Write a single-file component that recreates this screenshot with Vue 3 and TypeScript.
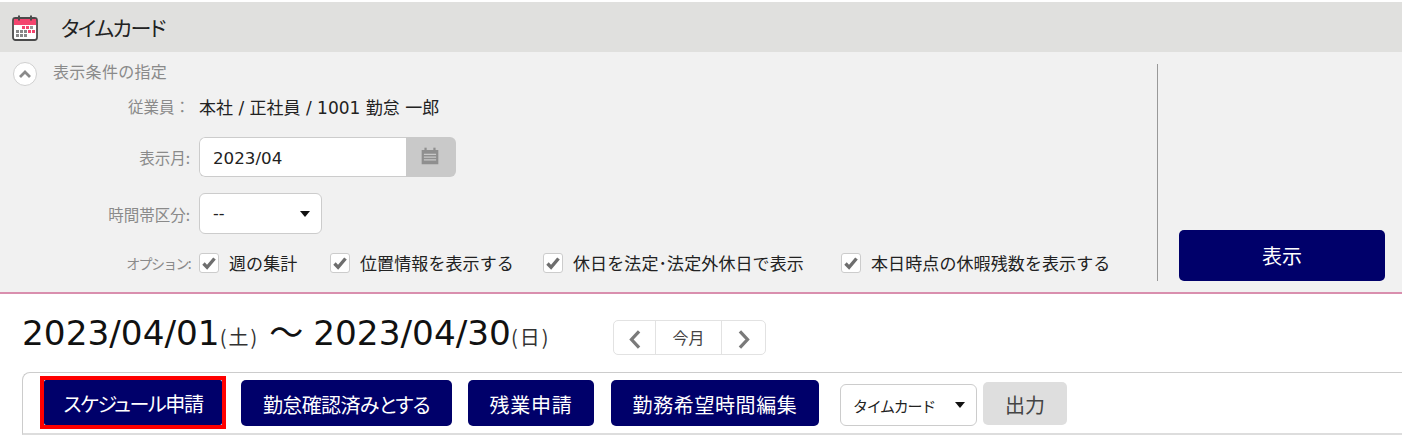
<template>
  <div class="timecard">
    <header class="page-head">
      <svg class="page-head__icon" viewBox="0 0 26 26">
        <rect x="1" y="3" width="24" height="22" rx="2.5" fill="#fff" stroke="#4a4a4a" stroke-width="1.8" />
        <path d="M2 4h22v6H2z" fill="#f4446e" />
        <rect x="6" y="0.5" width="2" height="5" fill="#4a4a4a" />
        <rect x="18" y="0.5" width="2" height="5" fill="#4a4a4a" />
        <g v-for="cell in calendarCells" :key="cell.x + '-' + cell.y">
          <rect :x="cell.x" :y="cell.y" width="3" height="3" :fill="cell.fill" />
        </g>
      </svg>
      <h1 class="page-head__title">タイムカード</h1>
    </header>

    <section class="filter">
      <div class="filter__main">
        <div class="filter__toggle">
          <span class="toggle-circle">
            <svg viewBox="0 0 14 10" width="14" height="10">
              <path d="M2 8L7 3l5 5" fill="none" stroke="#8a8a8a" stroke-width="2.8" />
            </svg>
          </span>
          <span class="filter__toggle-text">表示条件の指定</span>
        </div>

        <div class="field field--employee">
          <span class="field__label">従業員：</span>
          <span class="field__text">本社 / 正社員 / 1001 勤怠 一郎</span>
        </div>

        <div class="field field--month">
          <span class="field__label">表示月:</span>
          <div class="month-input">
            <span class="month-input__value">2023/04</span>
            <span class="month-input__btn">
              <svg viewBox="0 0 18 18" width="20" height="20">
                <path d="M1.500 3.500h15v13h-15z" fill="#8f8f8f" />
                <rect x="4" y="1.500" width="2" height="3" fill="#8f8f8f" />
                <rect x="12" y="1.500" width="2" height="3" fill="#8f8f8f" />
                <path d="M3.500 7.500h11M3.500 10h11M3.500 12.500h11" stroke="#c9c9c9" stroke-width="1" />
              </svg>
            </span>
          </div>
        </div>

        <div class="field field--zone">
          <span class="field__label">時間帯区分:</span>
          <div class="select select--zone">
            <span>--</span>
            <i class="select__arrow"></i>
          </div>
        </div>

        <div class="field field--options">
          <span class="field__label field__label--narrow">オプション:</span>
          <div class="options">
            <label v-for="opt in options" :key="opt.text" class="option" :style="{ width: opt.width + 'px' }">
              <span class="option__box">
                <svg viewBox="0 0 16 14" width="16" height="14">
                  <path d="M2.500 7.500l3.600 3.800L13.500 2.500" fill="none" stroke="#6e6e6e" stroke-width="3.400" />
                </svg>
              </span>
              <span class="option__text">{{ opt.text }}</span>
            </label>
          </div>
        </div>
      </div>

      <div class="filter__side">
        <button class="btn btn--show">表示</button>
      </div>
    </section>

    <section class="period">
      <h2 class="period__title">
        2023/04/01<small>(土)</small><span class="period__tilde">～</span>2023/04/30<small>(日)</small>
      </h2>
      <div class="pager">
        <span class="pager__arrow pager__arrow--prev">
          <svg viewBox="0 0 12 18" width="14" height="21"><path d="M9.500 2L3 9l6.500 7" fill="none" stroke="#7a7a7a" stroke-width="2.800" /></svg>
        </span>
        <span class="pager__label">今月</span>
        <span class="pager__arrow pager__arrow--next">
          <svg viewBox="0 0 12 18" width="14" height="21"><path d="M2.500 2L9 9l-6.500 7" fill="none" stroke="#7a7a7a" stroke-width="2.800" /></svg>
        </span>
      </div>
    </section>

    <section class="toolbar">
      <span class="marker">
        <button class="btn btn--action btn--schedule">スケジュール申請</button>
      </span>
      <button class="btn btn--action btn--confirm">勤怠確認済みとする</button>
      <button class="btn btn--action btn--overtime">残業申請</button>
      <button class="btn btn--action btn--wish">勤務希望時間編集</button>
      <div class="select select--type">
        <span>タイムカード</span>
        <i class="select__arrow"></i>
      </div>
      <button class="btn btn--output">出力</button>
    </section>
  </div>
</template>

<script setup lang="ts">
interface Option {
  text: string
  width: number
}

interface Cell {
  x: number
  y: number
  fill: string
}

const options: Option[] = [
  { text: '週の集計', width: 131 },
  { text: '位置情報を表示する', width: 213 },
  { text: '休日を法定･法定外休日で表示', width: 298 },
  { text: '本日時点の休暇残数を表示する', width: 280 }
]

const calendarCells: Cell[] = [
  { x: 10, y: 11, fill: '#f4446e' },
  { x: 14, y: 11, fill: '#f4446e' },
  { x: 18, y: 11, fill: '#999' },
  { x: 4, y: 15, fill: '#888' },
  { x: 8, y: 15, fill: '#888' },
  { x: 12, y: 15, fill: '#888' },
  { x: 16, y: 15, fill: '#f4446e' },
  { x: 20, y: 15, fill: '#f4446e' },
  { x: 4, y: 19, fill: '#888' },
  { x: 8, y: 19, fill: '#888' },
  { x: 12, y: 19, fill: '#888' }
]
</script>

<style>
html,
body {
  margin: 0;
  background: #fff;
}
</style>

<style scoped>
.timecard {
  width: 1402px;
  height: 446px;
  overflow: hidden;
  padding-top: 2px;
  box-sizing: border-box;
  font-family: "DejaVu Sans", "Noto Sans CJK JP", sans-serif;
  color: #222;
}

.page-head {
  height: 50px;
  background: #e0e0de;
  display: flex;
  align-items: center;
  padding-left: 12px;
  box-sizing: border-box;
}

.page-head__icon {
  width: 26px;
  height: 26px;
  margin-top: 1px;
}

.page-head__title {
  margin: 0 0 0 23px;
  font-family: "Noto Sans CJK JP", sans-serif;
  font-feature-settings: "palt";
  font-size: 21px;
  letter-spacing: -1.5px;
  font-weight: 400;
  color: #222;
}

.filter {
  height: 242px;
  box-sizing: border-box;
  background: #f1f1f1;
  border-bottom: 2px solid #d98fae;
  display: flex;
  padding-top: 12px;
}

.filter__main {
  width: 1158px;
  flex-shrink: 0;
  box-sizing: border-box;
  border-right: 1px solid #999;
  height: 217px;
  display: flex;
  flex-direction: column;
}

.filter__toggle {
  display: flex;
  align-items: center;
  gap: 16px;
  padding-left: 13px;
  height: 22px;
  margin-top: -1px;
  font-family: "Noto Sans CJK JP", sans-serif;
  font-size: 16px;
  letter-spacing: 0.3px;
  color: #8a8a8a;
}

.filter__toggle-text {
  margin-bottom: 6px;
  line-height: 22px;
}

.toggle-circle {
  width: 24px;
  height: 24px;
  box-sizing: border-box;
  border: 1px solid #d0d0d0;
  border-radius: 50%;
  background: #fff;
  display: flex;
  align-items: center;
  justify-content: center;
}

.field {
  display: flex;
  align-items: center;
}

.field__label {
  width: 190px;
  flex-shrink: 0;
  margin-right: 9px;
  text-align: right;
  font-family: "Noto Sans CJK JP", sans-serif;
  font-size: 15.5px;
  color: #8a8a8a;
}

.field__label--narrow {
  font-size: 14px;
  letter-spacing: -1.7px;
}

.field__text {
  font-size: 17px;
  color: #222;
}

.field--employee {
  margin-top: 9px;
  height: 24px;
}

.field--month {
  margin-top: 19px;
}

.field--zone {
  margin-top: 16px;
}

.field--options {
  margin-top: 16px;
}

.month-input {
  width: 257px;
  height: 40px;
  display: flex;
  border-radius: 6px;
  overflow: hidden;
}

.month-input__value {
  flex: 1;
  box-sizing: border-box;
  background: #fff;
  border: 1px solid #ccc;
  border-right: 0;
  border-radius: 6px 0 0 6px;
  padding-left: 13px;
  line-height: 40px;
  font-size: 16.7px;
}

.month-input__btn {
  width: 50px;
  background: #c9c9c9;
  display: flex;
  align-items: center;
  justify-content: center;
  padding: 0 2px 3px 0;
  box-sizing: border-box;
}

.select {
  box-sizing: border-box;
  background: #fff;
  border: 1px solid #ccc;
  border-radius: 6px;
  display: flex;
  align-items: center;
  justify-content: space-between;
  font-size: 16px;
}

.select--zone {
  width: 123px;
  height: 41px;
  padding: 0 11px 0 13px;
}

.select__arrow {
  width: 0;
  height: 0;
  border-left: 5px solid transparent;
  border-right: 5px solid transparent;
  border-top: 6px solid #111;
}

.options {
  display: flex;
}

.option {
  display: flex;
  align-items: center;
  gap: 10px;
  flex-shrink: 0;
}

.option__box {
  width: 20px;
  height: 20px;
  box-sizing: border-box;
  background: #fff;
  border: 1px solid #ccc;
  border-radius: 3px;
  display: flex;
  align-items: center;
  justify-content: center;
}

.option__text {
  font-family: "Noto Sans CJK JP", sans-serif;
  font-size: 17px;
  letter-spacing: 0.1px;
  color: #222;
  white-space: nowrap;
}

.filter__side {
  flex: 1;
  display: flex;
  align-items: flex-start;
  padding: 166px 0 0 21px;
}

.btn {
  border: 0;
  border-radius: 5px;
  padding: 0;
  font-family: "Noto Sans CJK JP", sans-serif;
  background: #00006a;
  color: #fff;
}

.btn--show {
  width: 206px;
  height: 51px;
  font-size: 20px;
}

.period {
  display: flex;
  align-items: flex-start;
  padding: 17px 0 0 22px;
  height: 78px;
  box-sizing: border-box;
}

.period__title {
  margin: 0;
  width: 591px;
  flex-shrink: 0;
  font-size: 34.3px;
  font-weight: 400;
  line-height: 40px;
  color: #111;
  white-space: nowrap;
}

.period__title small {
  font-family: "Noto Sans CJK JP", sans-serif;
  font-size: 20px;
  letter-spacing: 2px;
  color: #333;
}

.period__tilde {
  font-family: "Noto Sans CJK JP", sans-serif;
  margin: 0 10px 0 10px;
  font-size: 34px;
}

.pager {
  display: flex;
  height: 35px;
  box-sizing: border-box;
  border: 1px solid #e2e2e2;
  border-radius: 5px;
  margin-top: 9px;
}

.pager__arrow {
  display: flex;
  align-items: center;
  justify-content: center;
  padding-top: 4px;
  box-sizing: border-box;
}

.pager__arrow--prev {
  width: 41px;
}

.pager__arrow--next {
  width: 43px;
}

.pager__label {
  width: 65px;
  border-left: 1px solid #e2e2e2;
  border-right: 1px solid #e2e2e2;
  text-align: center;
  font-family: "Noto Sans CJK JP", sans-serif;
  font-size: 16px;
  line-height: 33px;
  color: #444;
}

.toolbar {
  margin-left: 22px;
  height: 63px;
  box-sizing: border-box;
  border: 1px solid #ccc;
  border-right: 0;
  border-bottom: 2px solid #ddd;
  border-top-left-radius: 8px;
  display: flex;
  align-items: flex-start;
  padding: 7px 0 0 21px;
}

.marker {
  display: flex;
  margin: -4px;
  border: 4px solid #f00;
  flex-shrink: 0;
}

.btn--action {
  height: 46px;
  padding-top: 2px;
  font-size: 20px;
  flex-shrink: 0;
  font-feature-settings: "palt";
}

.btn--schedule {
  width: 178px;
  height: 45px;
  border-radius: 2px;
  letter-spacing: -1.4px;
}

.btn--confirm {
  width: 211px;
  margin-left: 19px;
  letter-spacing: -0.6px;
}

.btn--overtime {
  width: 126px;
  margin-left: 16px;
  letter-spacing: 0.7px;
}

.btn--wish {
  width: 208px;
  margin-left: 17px;
  letter-spacing: 0.6px;
}

.select--type {
  width: 137px;
  height: 42px;
  margin: 4px 0 0 21px;
  padding: 0 11px 0 12px;
  font-family: "Noto Sans CJK JP", sans-serif;
  font-size: 15px;
  letter-spacing: -1.3px;
}

.btn--output {
  width: 84px;
  height: 43px;
  margin: 2px 0 0 6px;
  padding-top: 2px;
  background: #dedede;
  color: #444;
  font-size: 20px;
}
</style>
